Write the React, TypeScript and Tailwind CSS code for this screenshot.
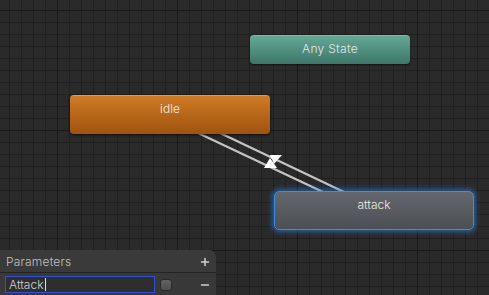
import { Plus, Minus } from "lucide-react";

const grid =
  "bg-[linear-gradient(to_right,#191919_1px,transparent_1px),linear-gradient(to_bottom,#191919_1px,transparent_1px),linear-gradient(to_right,#202020_1px,transparent_1px),linear-gradient(to_bottom,#202020_1px,transparent_1px)] bg-[size:120px_120px,120px_120px,12px_12px,12px_12px] bg-[position:57px_10px,57px_10px,9px_10px,9px_10px]";

export default function App() {
  return (
    <div
      className={`relative w-[489px] h-[295px] overflow-hidden bg-[#2a2a2a] ${grid} font-['Inter','Noto_Sans',sans-serif]`}
    >
      {/* transitions */}
      <svg className="absolute inset-0" width={489} height={295} viewBox="0 0 489 295">
        <line x1={198} y1={133} x2={323} y2={192} stroke="#c4c4c4" strokeWidth={2.2} />
        <line x1={220} y1={133} x2={344} y2={192} stroke="#c4c4c4" strokeWidth={2.2} />
        <polygon points="270,155 282,155 274,164" fill="#ffffff" />
        <polygon points="270,158 264,168 277,168" fill="#ffffff" />
      </svg>

      {/* Any State */}
      <div className="absolute left-[250px] top-[35px] w-[160px] h-[29px] rounded-[4px] bg-gradient-to-b from-[#64a894] to-[#3d7769] border-t border-[#7dbba8] shadow-[0_1px_2px_rgba(0,0,0,0.6)] text-center pt-[5px] text-[12px] leading-[16px] font-light text-[#e6e6e6] tracking-[0.3px]">
        Any State
      </div>

      {/* idle */}
      <div className="absolute left-[70px] top-[95px] w-[200px] h-[39px] rounded-[4px] bg-gradient-to-b from-[#d07b25] to-[#9f530e] border-t border-[#e39a4e] shadow-[0_1px_3px_rgba(0,0,0,0.7)] text-center pt-[5px] text-[12px] leading-[16px] font-light text-[#f0f0f0]">
        idle
      </div>

      {/* attack */}
      <div className="absolute left-[274px] top-[191px] w-[200px] h-[39px] rounded-[5px] bg-gradient-to-b from-[#64686e] to-[#4c5055] border-[1.5px] border-[#3b8ee2] shadow-[0_0_5px_2px_rgba(40,130,230,0.6)] text-center pt-[5px] text-[12px] leading-[16px] font-light text-[#ececec]">
        attack
      </div>

      {/* Parameters panel */}
      <div className="absolute left-0 bottom-0 w-[216px] h-[45px] flex flex-col">
        <div className="h-[23px] flex items-center justify-between pl-[6px] pr-[5px] pt-[2px] bg-[#3a3a3a] rounded-tr-[7px] border-b border-[#232323]">
          <span className="text-[12px] font-light text-[#c2c2c2] tracking-[0.2px]">Parameters</span>
          <Plus size={12} strokeWidth={3} className="text-[#d0d0d0]" />
        </div>
        <div className="flex-1 flex items-center bg-[#383838] pl-[5px] pr-[5px] pt-[1px]">
          <div className="w-[150px] h-[17px] border-[1.5px] border-[#3151d4] bg-[#2e2e2e] flex items-center pl-[3px] text-[12px] font-light text-[#d2d2d2]">
            Attack
            <span className="w-px h-[13px] bg-[#e0e0e0] ml-[1px]" />
          </div>
          <div className="ml-[5px] w-[12px] h-[12px] rounded-[3px] bg-gradient-to-b from-[#626262] to-[#4e4e4e] border border-[#2a2a2a]" />
          <div className="flex-1 flex justify-end">
            <Minus size={12} strokeWidth={3} className="text-[#cfcfcf]" />
          </div>
        </div>
      </div>
    </div>
  );
}
